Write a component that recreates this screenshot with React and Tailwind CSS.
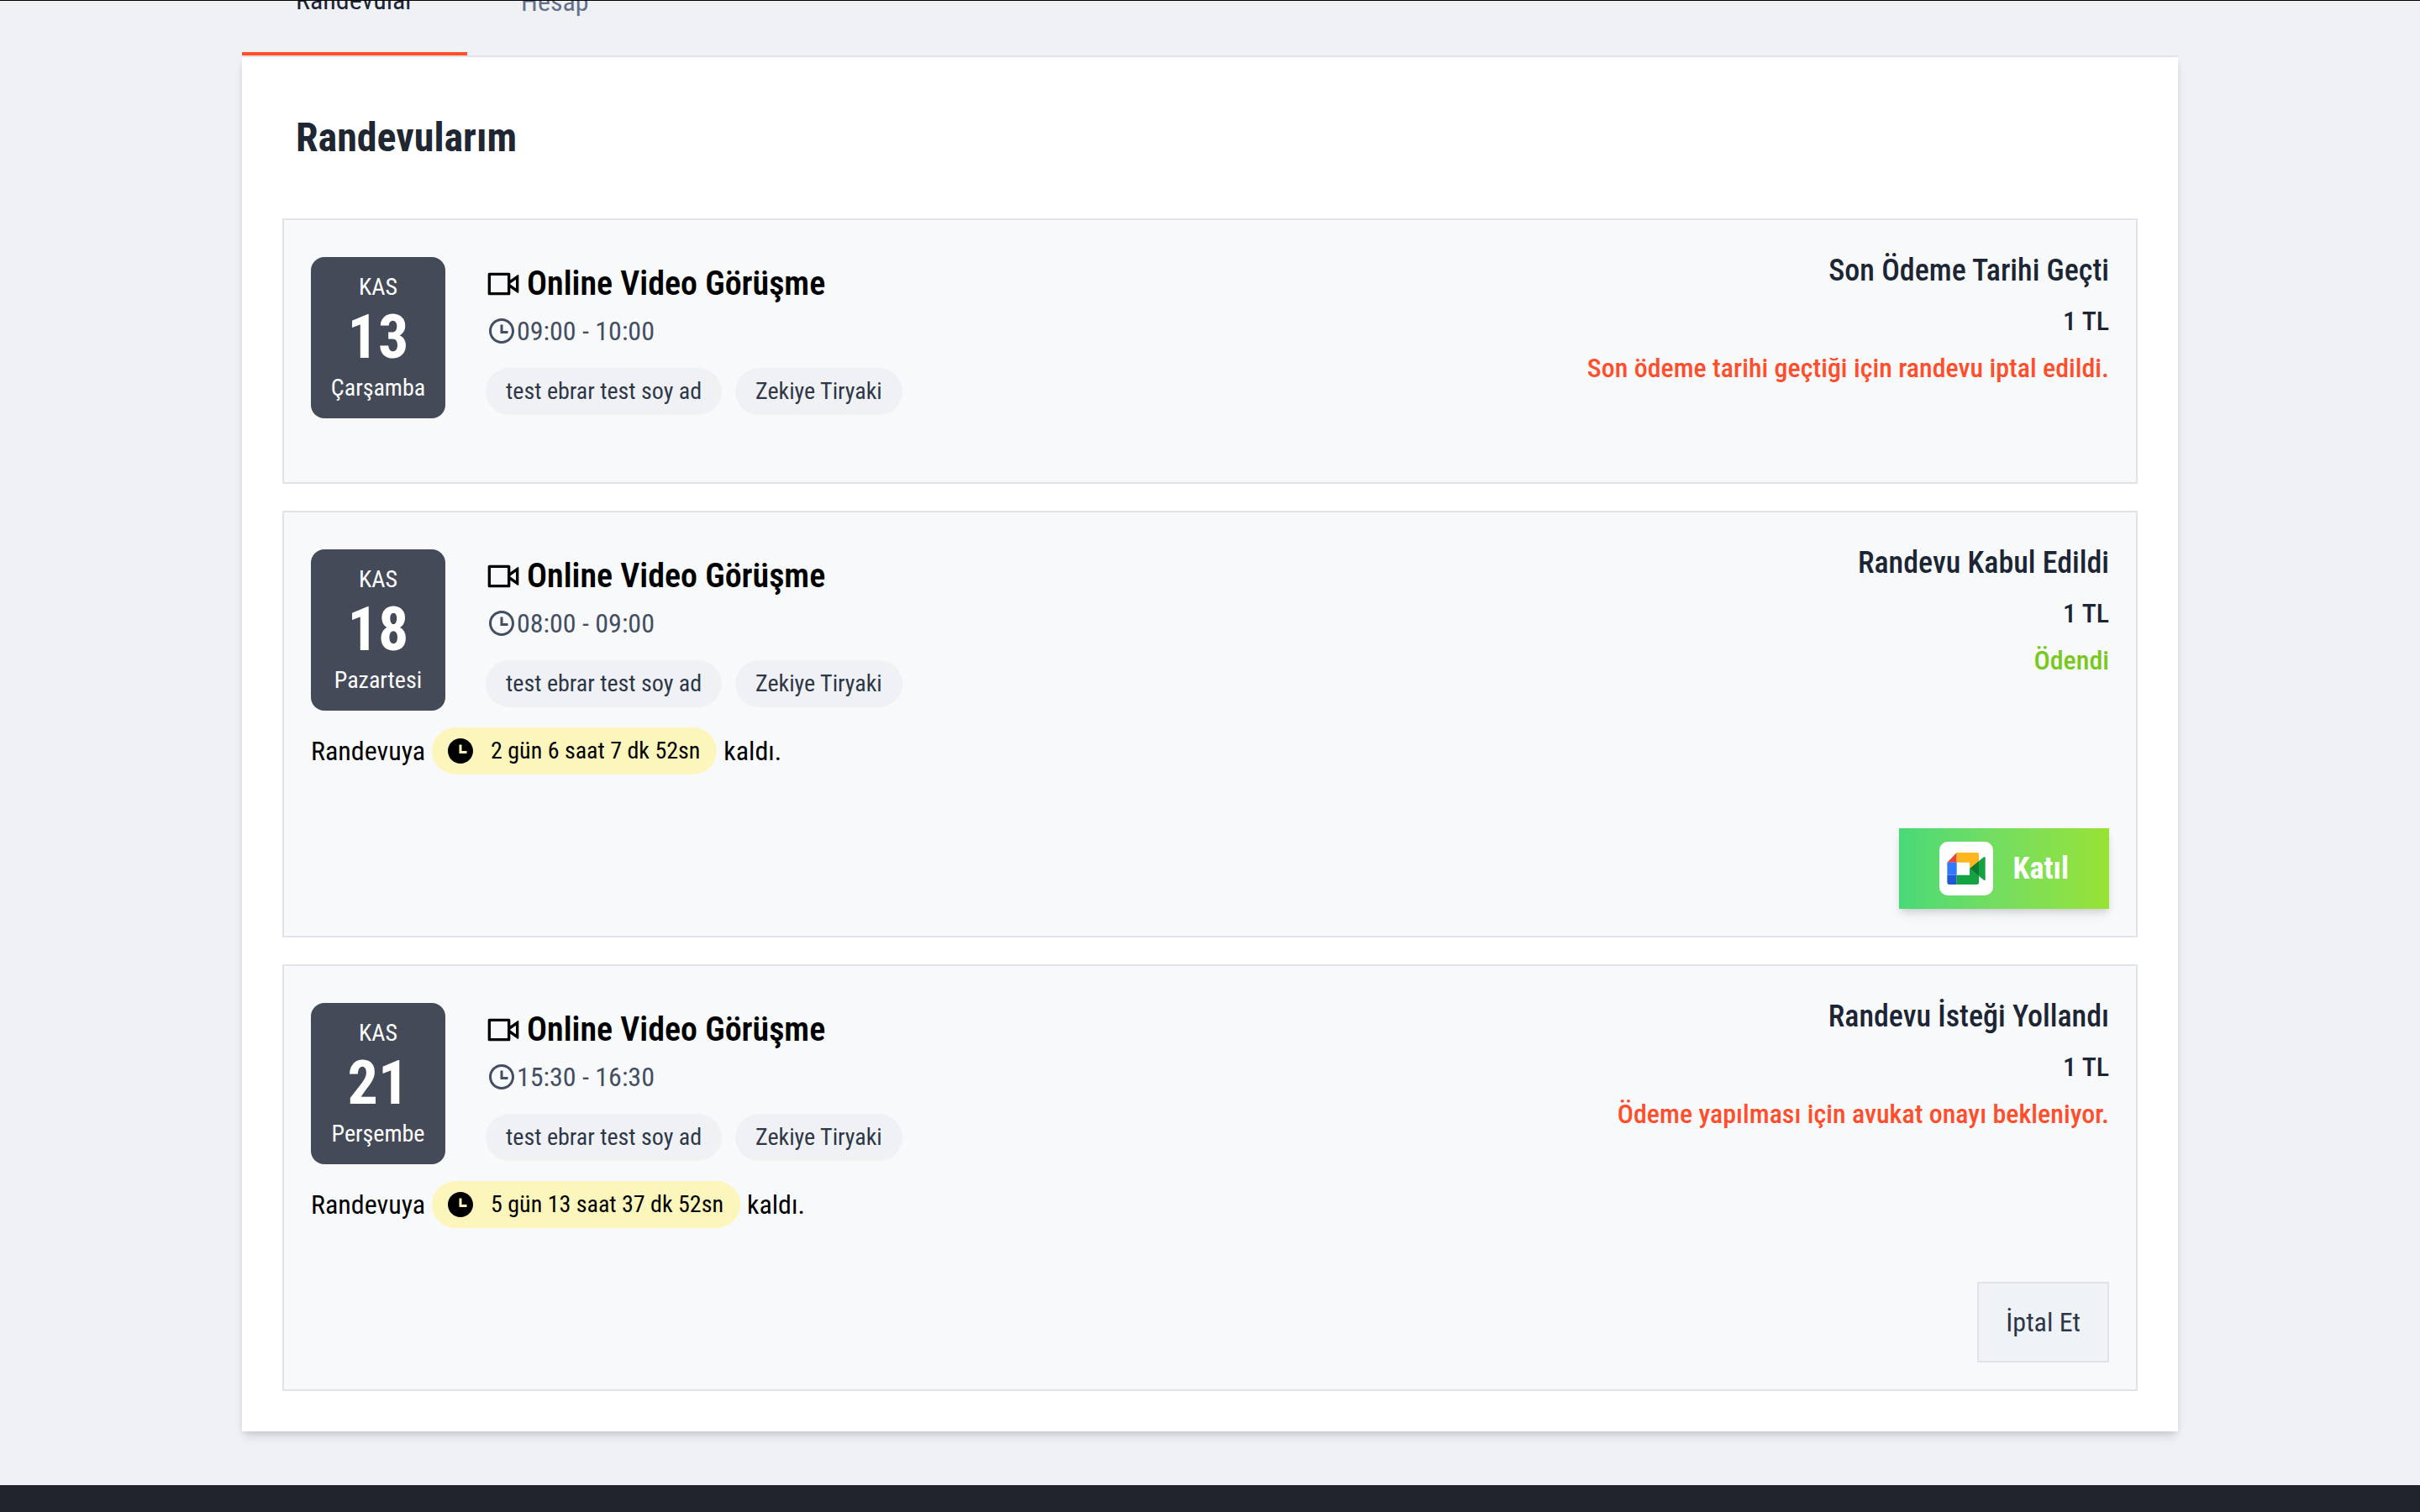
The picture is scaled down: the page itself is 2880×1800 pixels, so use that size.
import React from "react";
import { RiTimeLine, RiTimeFill, RiVideoOnLine } from "react-icons/ri";

const appointments = [
  {
    id: 1,
    day: "13",
    weekday: "Çarşamba",
    time: "09:00 - 10:00",
    status: "Son Ödeme Tarihi Geçti",
    note: "Son ödeme tarihi geçtiği için randevu iptal edildi.",
  },
  {
    id: 2,
    day: "18",
    weekday: "Pazartesi",
    time: "08:00 - 09:00",
    status: "Randevu Kabul Edildi",
    note: "Ödendi",
    paid: true,
    remaining: "2 gün 6 saat 7 dk 52sn",
    action: "join",
  },
  {
    id: 3,
    day: "21",
    weekday: "Perşembe",
    time: "15:30 - 16:30",
    status: "Randevu İsteği Yollandı",
    note: "Ödeme yapılması için avukat onayı bekleniyor.",
    remaining: "5 gün 13 saat 37 dk 52sn",
    action: "cancel",
  },
];

function MeetLogo() {
  return (
    <svg viewBox="0 0 192 192" className="size-16" aria-hidden="true">
      <rect width="192" height="192" rx="30" fill="#fff" />
      <path fill="#e94435" d="M62 39v35H28z" />
      <path fill="#3178fd" d="M28 74h34v45H28z" />
      <path fill="#2059d6" d="M28 119h34v34H35q-7 0-7-7z" />
      <path fill="#fdb61f" d="M62 39h72q7 0 7 7v24l-33 26V74H62z" />
      <path fill="#15a243" d="M62 119h46V96l33 26v24q0 7-7 7H62z" />
      <path fill="#0a7a2e" d="M108 96l33-27v54z" />
      <path fill="#15a243" d="M141 69l18-14q5-3 5 2v78q0 5-5 2l-18-14z" />
    </svg>
  );
}

function DateBadge({ day, weekday }) {
  return (
    <div className="flex w-40 flex-col rounded-2xl bg-[#444a58] py-4 text-center text-[28px] leading-10 text-white">
      <span>KAS</span>
      <span className="text-[72px] leading-20 font-bold">{day}</span>
      <span>{weekday}</span>
    </div>
  );
}

function Pill({ children }) {
  return (
    <span className="rounded-full bg-[#f0f1f5] px-6 text-[28px] leading-14 text-[#2d3748]">
      {children}
    </span>
  );
}

function Countdown({ remaining }) {
  return (
    <p className="mt-5 flex items-center gap-2 text-[32px] leading-14 text-black">
      Randevuya
      <span className="flex items-center gap-[18px] rounded-full bg-[#fdf6bc] pr-5 pl-4 text-[28px] leading-14">
        <RiTimeFill className="size-9" />
        {remaining}
      </span>
      kaldı.
    </p>
  );
}

function Appointment({ item }) {
  return (
    <article className="border-2 border-[#e2e3e9] bg-[#f8f9fb] p-8">
      <div className="flex items-start justify-between">
        <div className="pt-3">
          <div className="flex gap-12">
            <DateBadge day={item.day} weekday={item.weekday} />
            <div className="pt-1">
              <h2 className="flex items-center gap-2 pl-px text-[40px] leading-14 font-semibold text-black">
                <RiVideoOnLine className="size-10" />
                Online Video Görüşme
              </h2>
              <p className="mt-1 flex items-center pl-px text-[32px] leading-12 text-[#434e62]">
                <RiTimeLine className="size-9" />
                {item.time}
              </p>
              <div className="mt-5 flex gap-4">
                <Pill>test ebrar test soy ad</Pill>
                <Pill>Zekiye Tiryaki</Pill>
              </div>
            </div>
          </div>
          {item.remaining && <Countdown remaining={item.remaining} />}
        </div>
        <div className="flex flex-col gap-2 text-right text-[32px] leading-12 font-medium text-[#1c2534]">
          <h3 className="text-[36px] leading-14">{item.status}</h3>
          <p>1 TL</p>
          <p className={item.paid ? "text-[#78c81e]" : "text-[#ff4e2c]"}>{item.note}</p>
        </div>
      </div>
      <div className={item.action ? "mt-16 flex justify-end" : "mt-11"}>
        {item.action === "join" && (
          <button
            type="button"
            className="flex h-24 items-center gap-6 bg-linear-to-r from-[#48d978] to-[#98e233] px-12 text-[36px] font-bold text-white shadow-[0_8px_12px_-2px_rgba(0,0,0,0.1),0_4px_8px_-2px_rgba(0,0,0,0.1)]"
          >
            <MeetLogo />
            Katıl
          </button>
        )}
        {item.action === "cancel" && (
          <button
            type="button"
            className="h-24 border-2 border-[#e2e3e9] bg-[#eff3f8] px-8 text-[32px] text-[#2d3748]"
          >
            İptal Et
          </button>
        )}
      </div>
    </article>
  );
}

export default function App() {
  return (
    <div className="flex min-h-screen flex-col border-t border-black bg-[#f0f1f5] font-['Roboto_Condensed',Roboto,sans-serif]">
      <div className="mx-auto w-4/5 pb-16">
        <nav className="flex h-[67px] items-end overflow-hidden border-b-2 border-[#e2e3e9] text-[32px]">
          <button type="button" className="h-32 border-b-4 border-[#ff4e2c] px-16 text-[#1c2534]">
            Randevular
          </button>
          <button type="button" className="h-32 px-16 text-[#64708b]">
            Hesap
          </button>
        </nav>
        <main className="bg-white px-12 pt-16 pb-12 shadow-[0_8px_12px_-2px_rgba(0,0,0,0.1),0_4px_8px_-2px_rgba(0,0,0,0.1)]">
          <h1 className="px-4 text-[48px] leading-16 font-bold text-[#1f2733]">Randevularım</h1>
          <div className="mt-16 flex flex-col gap-8">
            {appointments.map((item) => (
              <Appointment key={item.id} item={item} />
            ))}
          </div>
        </main>
      </div>
      <footer className="min-h-8 flex-1 bg-[#20242c]" />
    </div>
  );
}
